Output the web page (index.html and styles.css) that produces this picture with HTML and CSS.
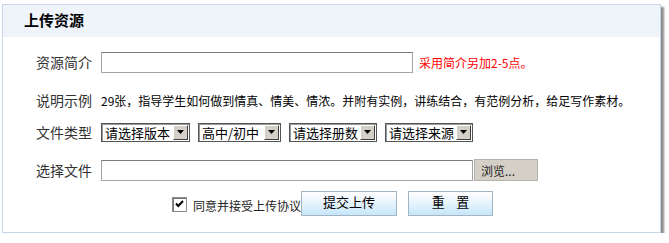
FILE: index.html
```html
<!DOCTYPE html>
<html lang="zh-CN">
<head>
    <meta charset="UTF-8">
    <title>上传资源</title>
    <link rel="stylesheet" href="styles.css">
</head>
<body>
    <div class="panel">
        <div class="panel-head">上传资源</div>

        <div class="panel-body">
            <div class="row row-intro">
                <span class="label">资源简介</span>
                <input type="text" class="text-box intro-box">
                <span class="tip">采用简介另加2-5点。</span>
            </div>

            <div class="row row-desc">
                <span class="label">说明示例</span>
                <span class="desc">29张，指导学生如何做到情真、情美、情浓。并附有实例，讲练结合，有范例分析，给足写作素材。</span>
            </div>

            <div class="row row-type">
                <span class="label">文件类型</span>
                <div class="pick w89"><span>请选择版本</span><i class="arrow"><svg width="7" height="4" viewBox="0 0 7 4"><path d="M0 0h7L3.5 4z" fill="#000"/></svg></i></div>
                <div class="pick w83"><span>高中/初中</span><i class="arrow"><svg width="7" height="4" viewBox="0 0 7 4"><path d="M0 0h7L3.5 4z" fill="#000"/></svg></i></div>
                <div class="pick w88"><span>请选择册数</span><i class="arrow"><svg width="7" height="4" viewBox="0 0 7 4"><path d="M0 0h7L3.5 4z" fill="#000"/></svg></i></div>
                <div class="pick w88"><span>请选择来源</span><i class="arrow"><svg width="7" height="4" viewBox="0 0 7 4"><path d="M0 0h7L3.5 4z" fill="#000"/></svg></i></div>
            </div>

            <div class="row row-file">
                <span class="label">选择文件</span>
                <input type="text" class="text-box file-box">
                <button class="browse">浏览...</button>
            </div>

            <div class="row row-submit">
                <span class="check"><svg width="9" height="8" viewBox="0 0 9 8"><path d="M1 3.5l2.2 2.5L8 1" fill="none" stroke="#000" stroke-width="2"/></svg></span>
                <span class="agree">同意并接受上传协议</span>
                <button class="btn btn-send">提交上传</button>
                <button class="btn btn-reset">重&nbsp;&nbsp;&nbsp;&nbsp;置</button>
            </div>
        </div>
    </div>
</body>
</html>
```

FILE: styles.css
```css
body {
    margin: 0;
    background: #fff;
    font-family: "Noto Sans CJK SC", "Liberation Sans", sans-serif;
    color: #000;
}

.panel {
    width: 657px;
    margin: 4px 0 0 2px;
    border: 1px solid #c4d6e8;
    background: #fff;
    box-shadow: 3px 3px 2px #8a8a8a;
}

.panel-head {
    height: 32px;
    line-height: 30px;
    padding-left: 21px;
    background: #eef4fa;
    font-size: 15px;
    font-weight: bold;
}

.panel-body {
    padding: 14px 0 16px;
}

.row {
    display: flex;
    align-items: center;
    padding-left: 33px;
}

.label {
    width: 56px;
    margin-right: 9px;
    font-size: 14px;
    color: #333;
    white-space: nowrap;
}

.row-intro {
    height: 22px;
}

.text-box {
    box-sizing: border-box;
    height: 21px;
    margin: 0;
    border: 1px solid #a5a5a5;
    border-top-color: #7a7a7a;
    background: #fff;
}

.intro-box {
    width: 312px;
}

.tip {
    margin-left: 6px;
    font-size: 12px;
    color: #f00;
}

.row-desc {
    height: 22px;
    margin-top: 16px;
}

.desc {
    font-size: 12px;
    white-space: nowrap;
}

.row-type {
    height: 20px;
    margin-top: 11px;
}

.pick {
    box-sizing: border-box;
    display: flex;
    align-items: center;
    justify-content: space-between;
    height: 19px;
    margin-right: 8px;
    padding: 0 1px 0 3px;
    border: 1px solid #555;
    box-shadow: inset 1px 1px 0 #999;
    background: #fff;
    font-size: 13px;
    white-space: nowrap;
}

.w89 { width: 89px; }
.w83 { width: 83px; }
.w88 { width: 88px; }

.arrow {
    box-sizing: border-box;
    display: flex;
    align-items: center;
    justify-content: center;
    width: 15px;
    height: 15px;
    background: #d4d0c8;
    border: 1px solid;
    border-color: #fff #404040 #404040 #fff;
}

.row-file {
    height: 22px;
    margin-top: 17px;
}

.file-box {
    width: 372px;
    height: 21px;
}

.browse {
    box-sizing: border-box;
    width: 64px;
    height: 22px;
    margin: 0 0 0 1px;
    padding: 0 0 0 6px;
    border: 1px solid #b5b2aa;
    background: #d4d0c8;
    font-family: inherit;
    font-size: 12px;
    text-align: left;
    color: #222;
}

.row-submit {
    height: 26px;
    margin-top: 9px;
    padding-left: 169px;
}

.check {
    box-sizing: border-box;
    display: flex;
    align-items: center;
    justify-content: center;
    width: 15px;
    height: 15px;
    margin: 2px 6px 0 0;
    border: 1px solid #8c8c8c;
    box-shadow: inset 1px 1px 0 #777;
    background: #fff;
}

.agree {
    font-size: 12px;
    color: #222;
    margin-top: 4px;
}

.btn {
    box-sizing: border-box;
    height: 25px;
    margin: 0;
    padding: 0 0 5px;
    border: 1px solid #a5b4c2;
    background: linear-gradient(#ffffff, #e8f4fd 45%, #c6e6fb);
    font-family: inherit;
    font-size: 13px;
    color: #000;
}

.btn-send {
    width: 96px;
}

.btn-reset {
    width: 85px;
    margin-left: 11px;
}
```
